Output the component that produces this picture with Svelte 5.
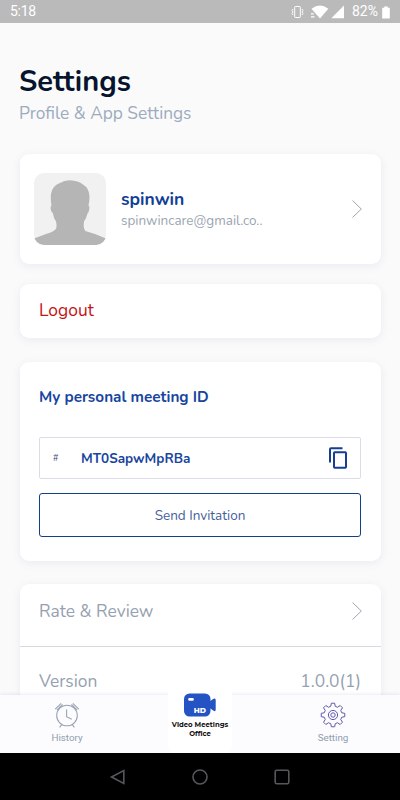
<script lang="ts">
	const user = {
		name: 'spinwin',
		email: 'spinwincare@gmail.co..',
		meetingId: 'MT0SapwMpRBa'
	};

	// Outline of the gear, eight teeth around the origin
	const gearPath = () => {
		const points: string[] = [];
		const step = Math.PI / 4;
		for (let i = 0; i < 8; i++) {
			const a = i * step;
			for (const [r, offset] of [
				[9, -0.25],
				[11.9, -0.14],
				[11.9, 0.14],
				[9, 0.25]
			]) {
				points.push(`${(r * Math.cos(a + offset)).toFixed(2)} ${(r * Math.sin(a + offset)).toFixed(2)}`);
			}
		}
		return 'M' + points.join('L') + 'Z';
	};
</script>

<svelte:head>
	<title>Settings</title>
</svelte:head>

{#snippet chevron()}
	<svg class="chevron" width="12" height="20" viewBox="0 0 12 20">
		<path d="M1.5 1.5L10.3 10L1.5 18.5" />
	</svg>
{/snippet}

<div class="screen">
	<div class="status">
		<span class="time">5:18</span>
		<svg class="vibrate" width="14" height="14" viewBox="0 0 14 14">
			<rect x="4.7" y="1.5" width="5.6" height="11" rx="0.6" />
			<path d="M3.1 4L2 5.5L3.1 7L2 8.5L3.1 10M11.9 4L13 5.5L11.9 7L13 8.5L11.9 10" />
		</svg>
		<svg class="wifi" width="19" height="14" viewBox="0 0 19 14">
			<path d="M1.5 3.8Q10 -2.8 18.3 3.8L10 13.4Z" />
			<path d="M1 8.2H3.8V9.6H1ZM1 11.2H4.5V12.6H1Z" />
		</svg>
		<svg class="signal" width="14" height="14" viewBox="0 0 14 14"><path d="M13 0.5V13.3H0.3Z" /></svg>
		<span class="percent">82%</span>
		<svg class="battery" width="8" height="14" viewBox="0 0 8 14">
			<path d="M2.2 1.6H5.8V2.8H7.8V13.4H0.2V2.8H2.2Z" />
		</svg>
	</div>

	<main>
		<h1>Settings</h1>
		<p class="subtitle">Profile &amp; App Settings</p>

		<section class="card profile">
			<svg class="avatar" width="72" height="72" viewBox="0 0 72 72">
				<rect width="72" height="72" fill="#f1f1f1" />
				<path
					fill="#b5b5b5"
					d="M0 72V65.5L12 61Q21 58.5 22.3 55Q23 52 22 48.5Q19.5 45 18.8 40Q16.8 39 16.6 35Q16.5 33 17.5 32.5Q15.8 23 18 17.5Q20 12 26 10Q31 6.8 38 7.5Q45 8 49 11.5Q55 15 55.5 23Q55.6 28 54.5 32.5Q56 33 55.3 36Q55 39.5 53.5 40.5Q52.5 45 50 48.5Q49 55 51.3 58L61 61L72 65.5V72Z"
				/>
			</svg>
			<div class="who">
				<div class="name">{user.name}</div>
				<div class="email">{user.email}</div>
			</div>
			{@render chevron()}
		</section>

		<section class="card logout"><span>Logout</span></section>

		<section class="card meeting">
			<h2>My personal meeting ID</h2>
			<div class="field">
				<span class="hash">#</span>
				<span class="id">{user.meetingId}</span>
				<svg class="copy" width="20" height="24" viewBox="0 0 20 24">
					<path d="M2 16.5V3.2Q2 2.2 3 2.2H14.5" />
					<rect x="6" y="6.2" width="12" height="15.6" rx="0.8" />
				</svg>
			</div>
			<button><span>Send Invitation</span></button>
		</section>

		<section class="card list">
			<div class="row">
				<span class="rate">Rate &amp; Review</span>
				{@render chevron()}
			</div>
			<div class="row version">
				<span class="label">Version</span>
				<span class="number">1.0.0(1)</span>
			</div>
		</section>
	</main>

	<nav class="tabs">
		<div class="tab">
			<svg class="clock" width="26" height="26" viewBox="0 0 26 26">
				<circle cx="13" cy="13.5" r="10.3" />
				<path d="M12.6 7.5V14.7L17.8 17.3M7.7 22.6L5.6 25.3M18.3 22.6L20.4 25.3" />
				<path d="M1.2 7.1L7.2 1.3M2.8 8.2L8.6 2.5M24.8 7.1L18.8 1.3M23.2 8.2L17.4 2.5" />
			</svg>
			<span class="history">History</span>
		</div>
		<div class="meet">
			<svg width="34" height="24" viewBox="0 0 34 24">
				<rect x="1" y="0.5" width="26.5" height="23" rx="5.5" fill="#2453c4" />
				<path d="M26 9L30.5 5.8Q32.7 4.8 32.7 7V16.5Q32.7 19 30.5 17.7L26 14.5Z" fill="#2453c4" />
				<rect x="5.2" y="5" width="5.6" height="2.8" rx="1.2" fill="#fff" />
				<text x="10.8" y="20" textLength="12.2" lengthAdjust="spacingAndGlyphs">HD</text>
			</svg>
			<span class="brand">Video Meetings</span>
			<span class="brand office">Office</span>
		</div>
		<div class="tab">
			<svg class="gear" width="26" height="26" viewBox="-13 -13 26 26">
				<path d={gearPath()} />
				<circle r="4.6" />
				<circle r="2.2" />
			</svg>
			<span class="setting">Setting</span>
		</div>
	</nav>

	<div class="system">
		<svg width="20" height="20" viewBox="0 0 20 20"><path d="M15.8 3.6V16.4L3.5 10Z" /></svg>
		<svg width="20" height="20" viewBox="0 0 20 20"><circle cx="10" cy="10" r="7" /></svg>
		<svg width="20" height="20" viewBox="0 0 20 20">
			<rect x="3.2" y="3.2" width="13.6" height="13.6" rx="1.6" />
		</svg>
	</div>
</div>

<style>
	:global(body) {
		margin: 0;
	}

	.screen {
		display: flex;
		flex-direction: column;
		width: 400px;
		height: 800px;
		overflow: hidden;
		background: #fafafa;
		font-family: Nunito, Lato, sans-serif;
	}

	svg {
		flex: none;
		display: block;
	}

	.status {
		flex: none;
		display: flex;
		align-items: center;
		box-sizing: border-box;
		height: 23px;
		padding: 0 10px;
		background: #bababa;
		color: #fff;
		font: 14px/23px Roboto, sans-serif;
	}

	.time {
		letter-spacing: -0.3px;
	}

	.status svg {
		fill: #fff;
	}

	.status .vibrate {
		margin-left: auto;
		fill: none;
		stroke: #fff;
	}

	.wifi {
		margin-left: 6px;
	}

	.signal {
		margin-left: 2px;
	}

	.percent {
		margin: 0 4px 0 7px;
	}

	main {
		flex: 1;
		min-height: 0;
		overflow: hidden;
		padding: 0 19px 0 20px;
	}

	h1 {
		margin: 42px 0 0 -1px;
		color: #06142e;
		font-size: 29px;
		font-weight: 700;
		line-height: 34px;
	}

	.subtitle {
		margin: 3px 0 28px -1px;
		color: #9dabbe;
		font-size: 17.3px;
		line-height: 24px;
	}

	.card {
		box-sizing: border-box;
		background: #fff;
		border-radius: 9px;
		box-shadow: 0 2px 9px rgba(100, 100, 190, 0.1);
	}

	.chevron {
		margin-left: auto;
		fill: none;
		stroke: #9da5ad;
		stroke-width: 1;
	}

	.profile {
		display: flex;
		align-items: center;
		height: 110px;
		padding: 0 18px 0 14px;
	}

	.avatar {
		border-radius: 10px;
	}

	.who {
		margin-left: 15px;
		padding-top: 2px;
	}

	.name {
		color: #113f97;
		font-size: 17.5px;
		font-weight: 700;
		line-height: 22px;
	}

	.email {
		color: #9aa5b1;
		font-size: 13.5px;
		line-height: 22px;
	}

	.logout {
		height: 54px;
		margin-top: 20px;
		padding-left: 19px;
		color: #c51212;
		font-size: 17.4px;
		line-height: 53px;
	}

	.meeting {
		height: 199px;
		margin-top: 24px;
		padding: 25px 20px 0 19px;
	}

	h2 {
		margin: 0 0 30px;
		color: #1745a0;
		font-size: 15.3px;
		line-height: 20px;
	}

	.field {
		display: flex;
		align-items: center;
		box-sizing: border-box;
		height: 42px;
		padding: 0 12px 0 13px;
		border: 1px solid #dcdce8;
		border-radius: 2px;
	}

	.hash {
		width: 28px;
		color: #4c4c7c;
		font-size: 9px;
	}

	.id {
		color: #1745a0;
		font-size: 13.5px;
		font-weight: 700;
	}

	.copy {
		margin-left: auto;
		fill: none;
		stroke: #173f91;
		stroke-width: 2;
	}

	button {
		display: block;
		box-sizing: border-box;
		width: 100%;
		height: 44px;
		margin-top: 14px;
		padding: 0;
		border: 1px solid #123f8c;
		border-radius: 3px;
		background: none;
		color: #435f9c;
		font: inherit;
		font-size: 13.5px;
	}

	.list {
		height: 140px;
		margin-top: 23px;
	}

	.row {
		display: flex;
		align-items: center;
		box-sizing: border-box;
		height: 63px;
		padding: 0 18px 8px 19px;
		border-bottom: 1px solid #d8dadd;
		color: #95a1b0;
		font-size: 17.4px;
	}

	.version {
		justify-content: space-between;
		height: 76px;
		padding: 0 20px 8px 19px;
		border: none;
	}

	.tabs {
		flex: none;
		display: grid;
		grid-template-columns: 1fr 64px 1fr;
		height: 58px;
		background: #fcfcff;
		box-shadow: 0 -1px 3px rgba(90, 90, 170, 0.12);
	}

	.tab {
		display: flex;
		flex-direction: column;
		align-items: center;
		padding-top: 7px;
		color: #8f9dac;
		font: 9.8px/14px Roboto, sans-serif;
	}

	.tab span {
		margin-top: 3px;
	}

	.tab:first-child {
		padding-right: 34px;
	}

	.tab:last-child {
		padding-left: 34px;
	}

	.clock {
		fill: none;
		stroke: #9ba4b4;
		stroke-width: 1.1;
	}

	.gear {
		fill: none;
		stroke: #5c5aa8;
		stroke-width: 1;
		stroke-linejoin: round;
	}

	.meet {
		display: flex;
		flex-direction: column;
		align-items: center;
		height: 66px;
		margin-top: -8px;
		padding-top: 6px;
		box-sizing: border-box;
		background: #fff;
		border-radius: 8px;
	}

	.meet text {
		fill: #fff;
		font: 800 7px Montserrat, Inter, sans-serif;
	}

	.brand {
		color: #111;
		font: 700 6.9px/9px Montserrat, Inter, sans-serif;
		white-space: nowrap;
	}

	.meet svg + .brand {
		margin-top: 3px;
	}

	.system {
		flex: none;
		display: flex;
		align-items: center;
		justify-content: center;
		gap: 62px;
		height: 47px;
		background: #000;
	}

	.system svg {
		fill: none;
		stroke: #55585b;
		stroke-width: 1.6;
	}
</style>
